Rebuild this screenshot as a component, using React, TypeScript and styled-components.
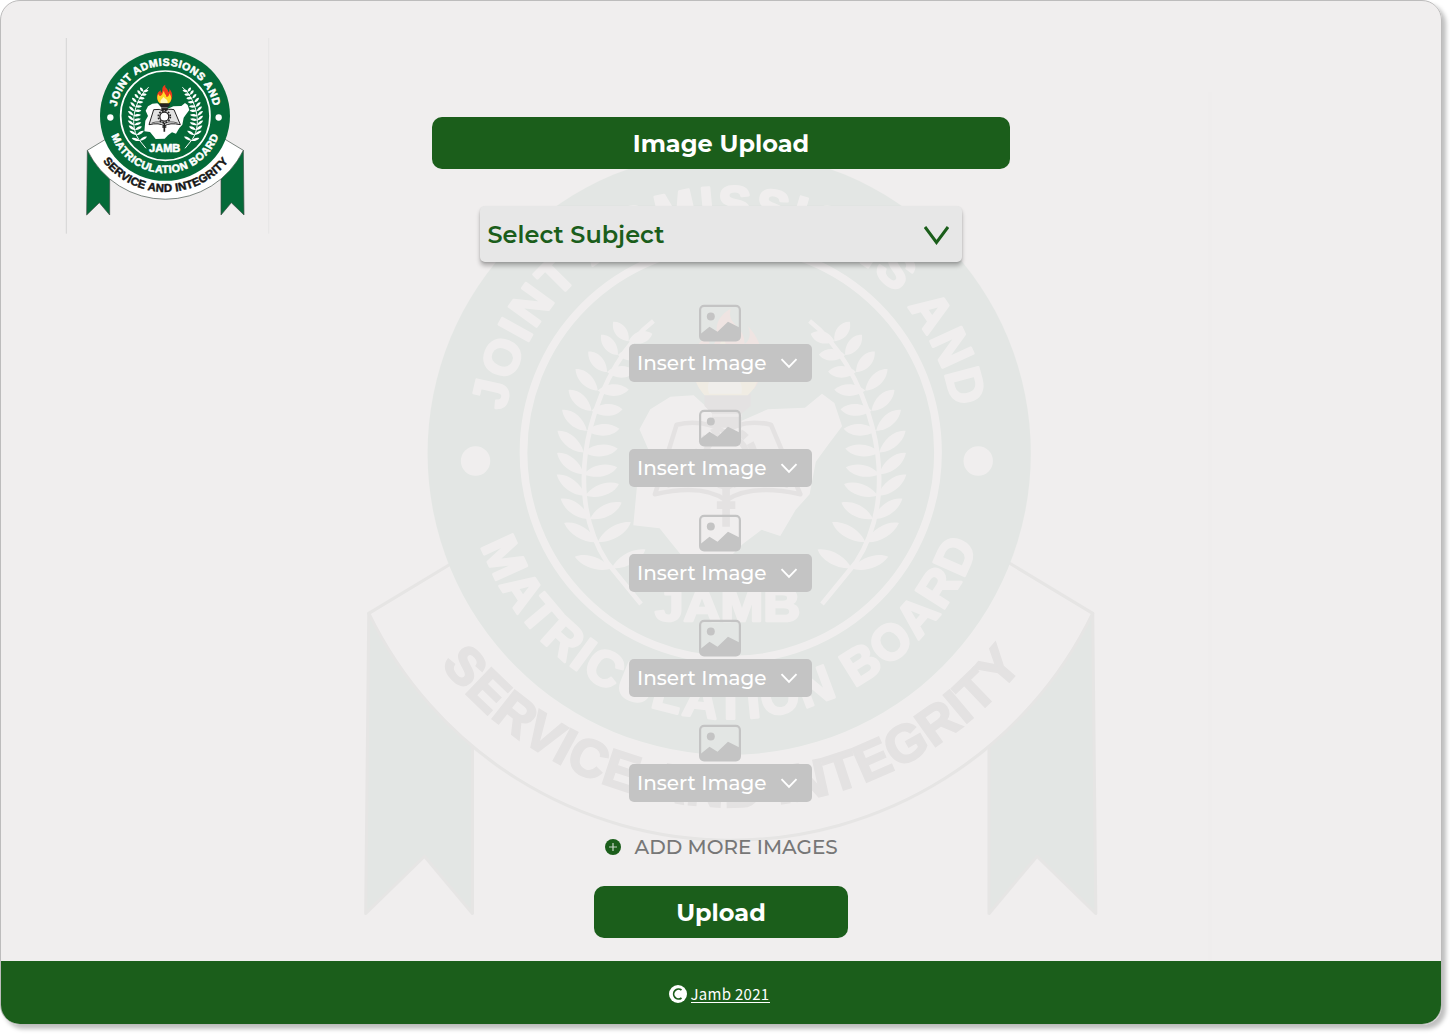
import React from "react";
import styled, { createGlobalStyle } from "styled-components";

const GREEN = "#1b5e1b";
const SEAL = "#046a38";

const GlobalStyle = createGlobalStyle`
  * { box-sizing: border-box; }
  body { margin: 0; background: #fff; font-family: Montserrat, Inter, "Liberation Sans", sans-serif; }
  button { font: inherit; border: 0; cursor: pointer; }
`;

const Canvas = styled.div`
  height: 1035px;
  overflow: hidden;
`;

const Frame = styled.div`
  width: 1442px;
  height: 1025px;
  border-radius: 20px;
  box-shadow: 4px 4px 4px rgba(0, 0, 0, 0.25);
`;

const Page = styled.main`
  position: relative;
  display: flex;
  flex-direction: column;
  width: 1442px;
  height: 1025px;
  overflow: hidden;
  border: 1px solid #bdbcbc;
  border-radius: 20px;
  background: #f0eeee;
`;

const Watermark = styled.div`
  position: absolute;
  left: 241px;
  top: 54px;
  opacity: 0.05;
`;

const Body = styled.div`
  position: relative;
  display: grid;
  grid-template-columns: 280px 880px 280px;
  height: 960px;
`;

const Brand = styled.div`
  padding: 29px 0 0 59px;
`;

const Form = styled.div`
  display: flex;
  flex-direction: column;
  align-items: center;
  padding-top: 116px;
`;

const Solid = styled.div<{ $w: number }>`
  display: flex;
  align-items: center;
  justify-content: center;
  width: ${(p) => p.$w}px;
  height: 52px;
  flex: none;
  padding-top: 2px;
  border-radius: 10px;
  background: ${GREEN};
`;

const Label = styled.span<{ $size: number; $weight: number; $color: string }>`
  font-size: ${(p) => p.$size}px;
  font-weight: ${(p) => p.$weight};
  color: ${(p) => p.$color};
  line-height: 30px;
  white-space: nowrap;
`;

const Select = styled.button`
  display: flex;
  align-items: center;
  justify-content: space-between;
  width: 482px;
  height: 56px;
  margin: 37px 1px 42px 0;
  padding: 2px 12px 0 8px;
  border-radius: 5px;
  background: #e7e7e7;
  box-shadow: 0 4px 4px rgba(0, 0, 0, 0.25), 0 1px 2px rgba(0, 0, 0, 0.12);
`;

const Slots = styled.div`
  display: flex;
  flex-direction: column;
  gap: 27px;
  margin-right: 1px;
`;

const Slot = styled.div`
  display: flex;
  flex-direction: column;
  align-items: center;
  height: 78px;
`;

const Insert = styled.button`
  display: flex;
  align-items: center;
  justify-content: space-between;
  width: 183px;
  height: 38px;
  margin-top: 2px;
  padding: 0 14px 0 8px;
  border-radius: 5px;
  background: #c4c4c4;
`;

const AddMore = styled.div`
  display: flex;
  align-items: center;
  gap: 14px;
  width: 234px;
  height: 30px;
  margin: 30px 0 24px 1px;
`;

const Footer = styled.footer`
  position: relative;
  display: flex;
  align-items: center;
  justify-content: center;
  gap: 4px;
  height: 63px;
  padding: 2px 4px 0 0;
  background: ${GREEN};
`;

const FooterLink = styled.a`
  border-bottom: 1px solid #fff;
  color: #fff;
  font: 400 15px/17px "Noto Sans CJK JP", "Noto Sans", sans-serif;
  letter-spacing: 0.3px;
`;

// Left laurel branch from tip to foot: x, y, outer leaf angle, inner leaf angle, leaf length.
const LEAVES = [
  [250, 185, -125, -14, 16], [243, 194, -126, 2, 17], [236, 205, -129, 2, 18],
  [230, 217, -133, 1, 20], [226, 230, -135, 0, 20], [223, 243, -137, -1, 21],
  [221, 257, -138, -4, 22], [221, 271, -139, -9, 22], [222, 285, -141, -17, 23],
  [225, 300, -143, -25, 23], [230, 315, -148, -29, 25], [239, 332, -160, -27, 25],
];

function Laurel({ flip }: { flip?: boolean }) {
  return (
    <g transform={flip ? "translate(633 0) scale(-1 1)" : undefined} fill="#fff">
      <path d="M266 172C232 198 202 276 236 328L258 355" fill="none" stroke="#fff" strokeWidth="3" />
      {LEAVES.map(([x, y, outer, inner, len]) =>
        [outer, inner].map((a) => (
          <path
            key={`${y}${a}`}
            transform={`translate(${x} ${y}) rotate(${a})`}
            d={`M0 0C${len * 0.25} -5 ${len * 0.7} -6 ${len} -1C${len * 0.8} 4 ${len * 0.35} 5 0 0Z`}
          />
        )),
      )}
    </g>
  );
}

function Seal({ id, width, height, framed }: { id: string; width: number; height: number; framed?: boolean }) {
  return (
    <svg width={width} height={height} viewBox="0 0 660 630" display="block" fontFamily="Liberation Sans, Arial, sans-serif" fontWeight="700">
      <defs>
        <path id={`${id}-top`} d="M170 230A147 147 0 0 1 460 230" />
        <path id={`${id}-low`} d="M154.5 317A171 171 0 0 0 477 313" />
        <path id={`${id}-band`} d="M128.5 394A239 239 0 0 0 510 388" />
      </defs>
      {framed && <path d="M19 24V611" stroke="#c8c8c8" strokeWidth="2" />}
      <path d="M626 24V611" stroke="#e2e2e2" strokeWidth="2" />
      <g stroke="#3c4a42" strokeWidth="2" strokeLinejoin="round">
        <path d="M82 361L80 555L118 518L149 555V430Z" fill={SEAL} />
        <path d="M550 361L552 555L514 518L483 555V430Z" fill={SEAL} />
        <path d="M82 361L140 326H492L550 361A260 260 0 0 1 82 361Z" fill="#fff" />
      </g>
      <circle cx="315" cy="257.5" r="195" fill={SEAL} />
      <circle cx="316" cy="257" r="134" fill="none" stroke="#fff" strokeWidth="5" />
      <circle cx="151" cy="262.5" r="9.5" fill="#fff" />
      <circle cx="476" cy="262.5" r="9.5" fill="#fff" />
      <g fill="#fff" stroke="#fff" strokeWidth="1.6" strokeLinejoin="round">
        <text fontSize="32"><textPath href={`#${id}-top`} textLength="411">JOINT ADMISSIONS AND</textPath></text>
        <text fontSize="32"><textPath href={`#${id}-low`} textLength="416">MATRICULATION BOARD</textPath></text>
        <text x="267" y="366" fontSize="30" textLength="94" lengthAdjust="spacingAndGlyphs">JAMB</text>
      </g>
      <text fontSize="34" fill="#151515" stroke="#151515" strokeWidth="1.4">
        <textPath href={`#${id}-band`} textLength="433">SERVICE AND INTEGRITY</textPath>
      </text>
      <Laurel />
      <Laurel flip />
      <path fill="#fff" d="M264 229L277 221L292 220L302 229L322 237L340 229L364 228L375 219L383 225L388 240L379 252L371 263L367 284L358 294L348 311L336 307L324 316L314 326L287 327L278 316L270 306L253 304L256 272L264 258L257 242Z" />
      <g stroke="#222" strokeWidth="3" strokeLinejoin="round">
        <path d="M281 239L267 284Q298 277 313 288Q329 277 361 284L342 239Q323 235 313 244Q298 235 281 239Z" fill="#e2e2e2" />
        <path d="M275 279Q300 271 313 281Q327 271 353 279" fill="none" strokeWidth="2" />
        <path d="M313 278V305M307 291H319" strokeWidth="5" />
        <circle cx="313" cy="260" r="18" fill="none" strokeWidth="5" strokeDasharray="5 4.4" />
        <circle cx="313" cy="260" r="13.5" fill="#fff" strokeWidth="4" />
      </g>
      <path d="M299 219H329V227L323 232V241H304V232L299 227Z" fill="#222" />
      <path d="M304 233H323" stroke="#aaa" strokeWidth="2" />
      <path fill="#ee3a1c" d="M296 216C288 203 289 187 303 181C300 191 306 190 307 181C306 173 309 168 316 164C313 175 325 174 325 187C329 184 329 179 327 175C337 186 341 201 331 216Z" />
      <path fill="#ffd928" d="M299 220C289 208 291 197 296 192C297 199 302 200 304 196C308 193 307 188 312 182C312 192 320 193 319 201C324 201 328 197 328 190C337 202 335 213 327 220Z" />
      <path fill="#fff8bb" d="M302 219C299 209 307 207 311 200C314 207 325 207 323 219Z" />
    </svg>
  );
}

function PictureIcon() {
  return (
    <svg width="43" height="38" viewBox="0 0 43 38" display="block">
      <rect x="1.1" y="1.9" width="39.8" height="34.4" rx="4" fill="none" stroke="#c4c4c4" strokeWidth="2.2" />
      <circle cx="11.8" cy="12.5" r="4" fill="#c4c4c4" />
      <path d="M1.5 30L10.5 22.8L18.5 27.8L29 17.8L40.5 23.5V33Q40.5 36 37.5 36H4.5Q1.5 36 1.5 33Z" fill="#c4c4c4" />
    </svg>
  );
}

export default function App() {
  return (
    <Canvas>
      <GlobalStyle />
      <Frame>
        <Page>
          <Watermark><Seal id="mark" width={1020.8} height={974.4} /></Watermark>
          <Body>
            <Brand><Seal id="logo" width={220} height={210} framed /></Brand>
            <Form>
              <Solid $w={578}><Label $size={24} $weight={700} $color="#fff">Image Upload</Label></Solid>
              <Select>
                <Label $size={24} $weight={600} $color={GREEN}>Select Subject</Label>
                <svg width="26" height="20" viewBox="0 0 26 20"><path d="M1 2L12.5 17.5L24 2" fill="none" stroke={GREEN} strokeWidth="3" /></svg>
              </Select>
              <Slots>
                {[0, 1, 2, 3, 4].map((n) => (
                  <Slot key={n}>
                    <PictureIcon />
                    <Insert>
                      <Label $size={20} $weight={500} $color="#fff">Insert Image</Label>
                      <svg width="18" height="12" viewBox="0 0 18 12"><path d="M1.5 2.2L9 9.9L16.5 2.2" fill="none" stroke="#fff" strokeWidth="1.9" /></svg>
                    </Insert>
                  </Slot>
                ))}
              </Slots>
              <AddMore>
                <svg width="16" height="16" viewBox="0 0 16 16"><circle cx="8" cy="8" r="8" fill={GREEN} /><path d="M8 4V12M4 8H12" stroke="#c8d6c8" strokeWidth="1.2" /></svg>
                <Label $size={20} $weight={500} $color="#777">ADD MORE IMAGES</Label>
              </AddMore>
              <Solid as="button" $w={254}><Label $size={24} $weight={700} $color="#fff">Upload</Label></Solid>
            </Form>
          </Body>
          <Footer>
            <svg width="18" height="18" viewBox="0 0 18 18"><circle cx="9" cy="9" r="9" fill="#fff" /><path d="M12.5 5A4.9 5 0 1 0 12.5 13" fill="none" stroke={GREEN} strokeWidth="1.7" /></svg>
            <FooterLink>Jamb 2021</FooterLink>
          </Footer>
        </Page>
      </Frame>
    </Canvas>
  );
}
